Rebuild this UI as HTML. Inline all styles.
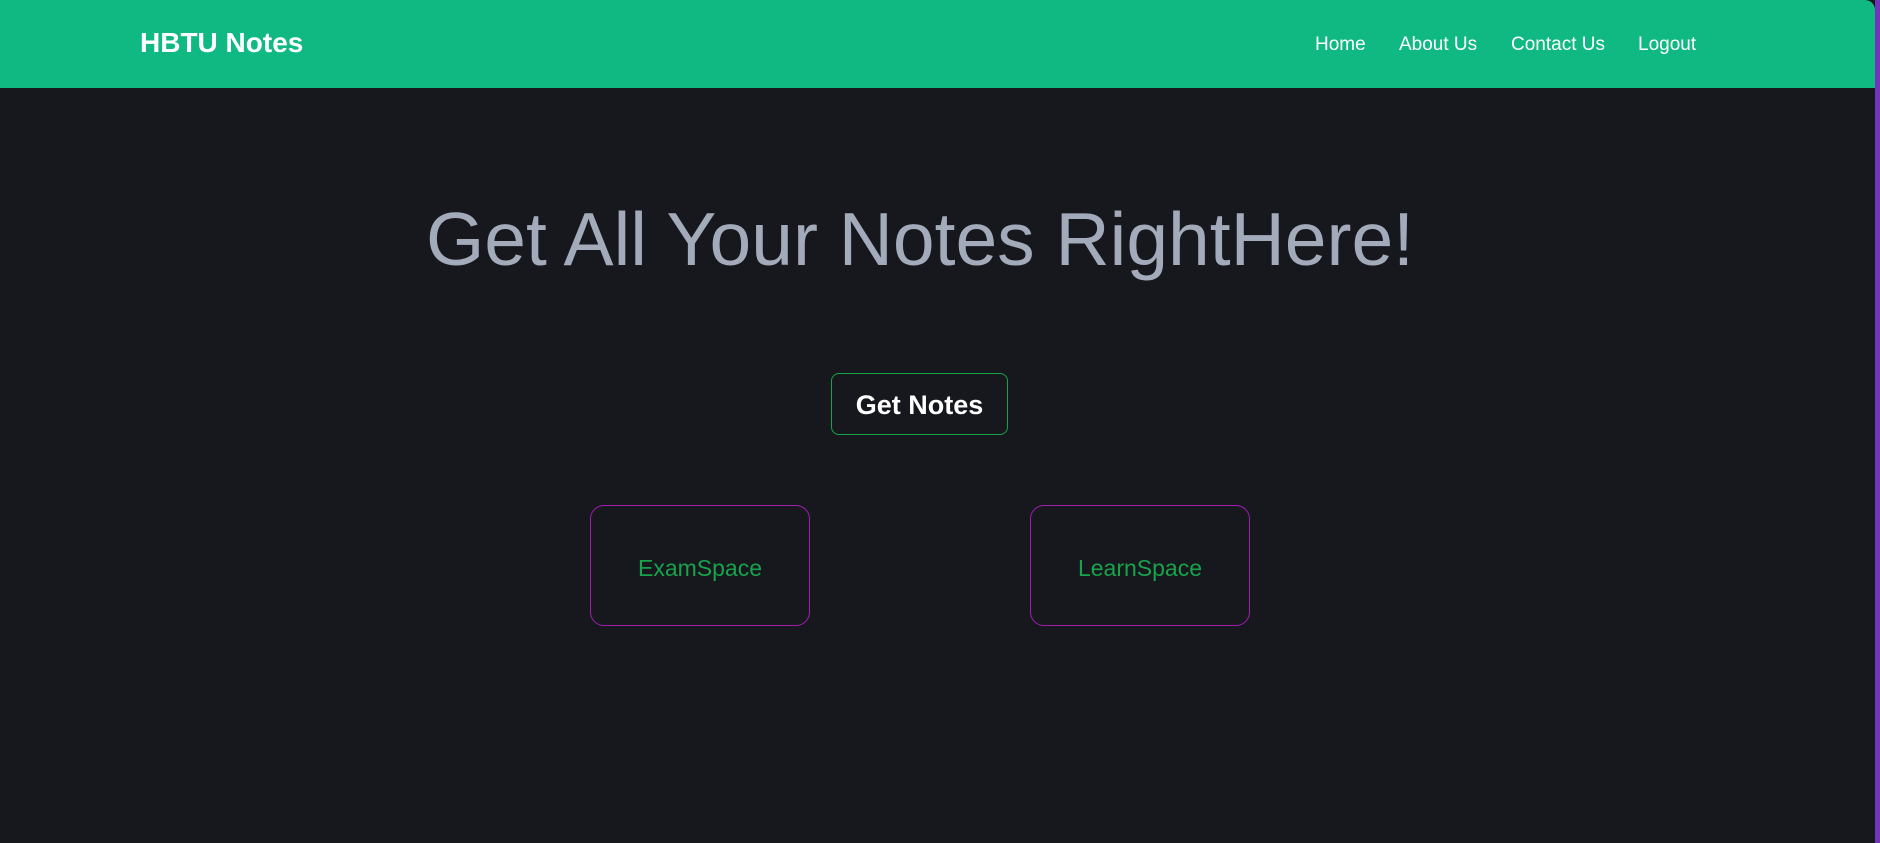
<!DOCTYPE html>
<html><head><meta charset="utf-8"><style>
html,body{margin:0;padding:0;}
body{width:1880px;height:843px;background:#16181e;position:relative;overflow:hidden;font-family:"Liberation Sans",sans-serif;}
.bar{position:absolute;right:0;top:0;width:5px;height:843px;background:#6f36b8;}
nav{position:absolute;left:0;top:0;width:1875px;height:88px;background:#10b981;border-top-right-radius:10px;}
.brand{position:absolute;left:140px;top:27px;font-size:28px;font-weight:bold;color:#fff;}
.links{position:absolute;top:34px;font-size:19px;color:#fff;}
h1{position:absolute;left:0;width:1840px;text-align:center;top:196px;margin:0;font-weight:normal;font-size:75px;color:#a3abbb;}
.btn{position:absolute;left:831px;top:373px;width:175px;height:60px;border:1px solid #16a34a;border-radius:8px;color:#fff;font-weight:bold;font-size:27px;text-align:center;line-height:62px;}
.card{position:absolute;top:505px;width:218px;height:119px;border:1px solid #a21caf;border-radius:14px;color:#16a34a;font-size:23px;text-align:center;line-height:124px;}
</style></head><body>
<nav>
<div class="brand">HBTU Notes</div>
<div class="links" style="left:1315px">Home</div>
<div class="links" style="left:1399px">About Us</div>
<div class="links" style="left:1511px">Contact Us</div>
<div class="links" style="left:1638px">Logout</div>
</nav>
<div class="bar"></div>
<h1>Get All Your Notes RightHere!</h1>
<div class="btn">Get Notes</div>
<div class="card" style="left:590px">ExamSpace</div>
<div class="card" style="left:1030px">LearnSpace</div>
</body></html>
